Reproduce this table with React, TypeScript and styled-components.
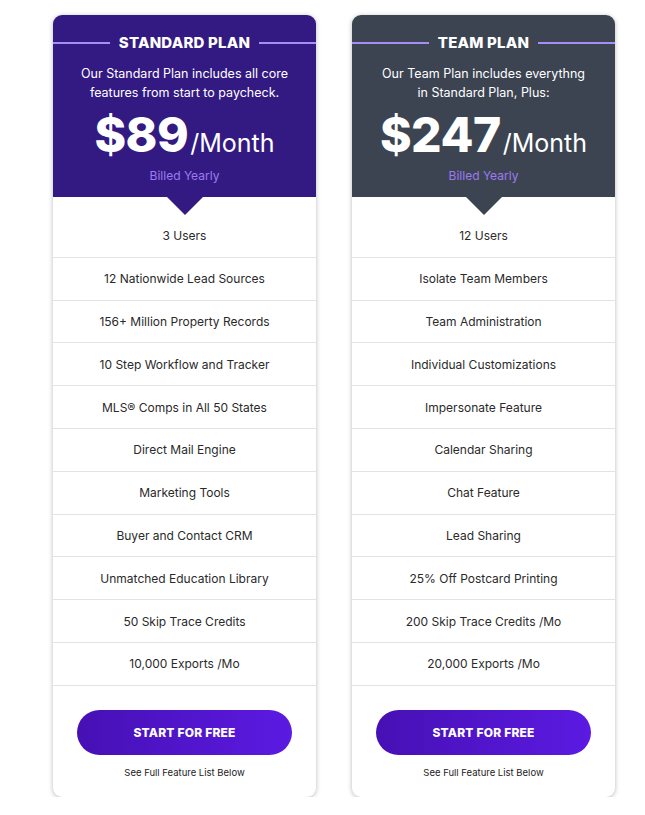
import React from "react";
import styled, { createGlobalStyle } from "styled-components";

const GlobalStyle = createGlobalStyle`
  body {
    margin: 0;
    background: #fff;
    font-family: Inter, "Open Sans", sans-serif;
  }
`;

const Page = styled.div`
  display: flex;
  gap: 36px;
  padding: 15px 0 0 53px;
  align-items: flex-start;
`;

const Card = styled.div`
  width: 263px;
  background: #fff;
  border-radius: 9px;
  overflow: hidden;
  box-shadow: 0 1px 5px rgba(0, 0, 0, 0.28);
  display: flex;
  flex-direction: column;
`;

const Header = styled.div<{ $bg: string }>`
  position: relative;
  background: ${(p) => p.$bg};
  padding: 19px 0 13px;
  display: flex;
  flex-direction: column;
  align-items: center;
  color: #fff;

  &::after {
    content: "";
    position: absolute;
    left: 50%;
    bottom: -18px;
    margin-left: -18px;
    border-left: 18px solid transparent;
    border-right: 18px solid transparent;
    border-top: 18px solid ${(p) => p.$bg};
  }
`;

const TitleRow = styled.div`
  width: 100%;
  display: flex;
  align-items: center;
  gap: 9px;

  &::before,
  &::after {
    content: "";
    flex: 1;
    height: 2px;
    background: #a68cf6;
  }
`;

const Title = styled.h2`
  margin: 0;
  font-size: 15px;
  line-height: 18px;
  font-weight: 800;
  letter-spacing: 0.2px;
`;

const Desc = styled.p`
  margin: 12px 0 0;
  font-size: 12.5px;
  line-height: 19px;
  text-align: center;
  padding: 0 20px;
`;

const Price = styled.div`
  margin-top: 5px;
  display: flex;
  align-items: baseline;
  line-height: 56px;
`;

const Amount = styled.span`
  font-size: 48px;
  font-weight: 800;
  letter-spacing: -0.5px;
`;

const Per = styled.span`
  font-size: 25px;
  line-height: 1;
  font-weight: 400;
  margin-left: 2px;
`;

const Billed = styled.div`
  margin-top: 5px;
  font-size: 12px;
  line-height: 16px;
  color: #9d7af2;
`;

const List = styled.ul`
  list-style: none;
  margin: 0;
  padding: 18px 0 0;
`;

const Item = styled.li`
  height: 41.8px;
  border-bottom: 1px solid #e3e3e3;
  display: flex;
  align-items: center;
  justify-content: center;
  font-size: 12px;
  color: #2a2a2a;
`;

const Footer = styled.div`
  padding: 24px 24px 18px;
  display: flex;
  flex-direction: column;
  align-items: center;
`;

const Button = styled.button`
  width: 100%;
  height: 45px;
  border: none;
  border-radius: 23px;
  background: linear-gradient(90deg, #4610b4, #5c1ae2);
  color: #fff;
  font-family: inherit;
  font-size: 12px;
  font-weight: 800;
  letter-spacing: 0.2px;
  cursor: pointer;
`;

const Note = styled.div`
  margin-top: 12px;
  font-size: 9.5px;
  line-height: 12px;
  color: #222;
`;

type Plan = {
  title: string;
  desc: string[];
  price: string;
  bg: string;
  features: string[];
};

const plans: Plan[] = [
  {
    title: "STANDARD PLAN",
    desc: ["Our Standard Plan includes all core", "features from start to paycheck."],
    price: "$89",
    bg: "#331a82",
    features: [
      "3 Users",
      "12 Nationwide Lead Sources",
      "156+ Million Property Records",
      "10 Step Workflow and Tracker",
      "MLS® Comps in All 50 States",
      "Direct Mail Engine",
      "Marketing Tools",
      "Buyer and Contact CRM",
      "Unmatched Education Library",
      "50 Skip Trace Credits",
      "10,000 Exports /Mo",
    ],
  },
  {
    title: "TEAM PLAN",
    desc: ["Our Team Plan includes everythng", "in Standard Plan, Plus:"],
    price: "$247",
    bg: "#3c4452",
    features: [
      "12 Users",
      "Isolate Team Members",
      "Team Administration",
      "Individual Customizations",
      "Impersonate Feature",
      "Calendar Sharing",
      "Chat Feature",
      "Lead Sharing",
      "25% Off Postcard Printing",
      "200 Skip Trace Credits /Mo",
      "20,000 Exports /Mo",
    ],
  },
];

const App = () => {
  return (
    <>
      <GlobalStyle />
      <Page>
        {plans.map((plan) => (
          <Card key={plan.title}>
            <Header $bg={plan.bg}>
              <TitleRow>
                <Title>{plan.title}</Title>
              </TitleRow>
              <Desc>
                {plan.desc[0]}
                <br />
                {plan.desc[1]}
              </Desc>
              <Price>
                <Amount>{plan.price}</Amount>
                <Per>/Month</Per>
              </Price>
              <Billed>Billed Yearly</Billed>
            </Header>
            <List>
              {plan.features.map((f) => (
                <Item key={f}>{f}</Item>
              ))}
            </List>
            <Footer>
              <Button>START FOR FREE</Button>
              <Note>See Full Feature List Below</Note>
            </Footer>
          </Card>
        ))}
      </Page>
    </>
  );
};

export default App;
